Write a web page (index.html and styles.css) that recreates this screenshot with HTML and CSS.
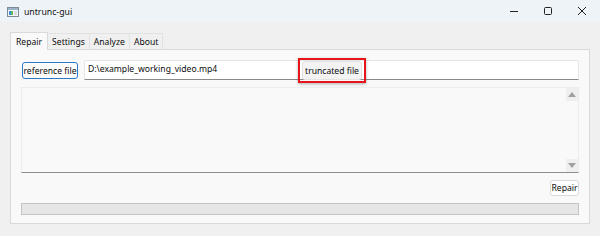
FILE: index.html
```html
<!DOCTYPE html>
<html lang="en">
<head>
    <meta charset="UTF-8">
    <title>untrunc-gui</title>
    <link rel="stylesheet" href="styles.css">
</head>
<body>
    <div class="window">
        <div class="titlebar">
            <svg class="app-icon" width="12" height="10" viewBox="0 0 12 10">
                <rect x="0.5" y="0.5" width="11" height="9" fill="#f4f6f8" stroke="#7a8a99"/>
                <rect x="1" y="1" width="10" height="2" fill="#9db4c8"/>
                <rect x="2" y="4" width="2" height="4" fill="#3a8fd0"/>
                <rect x="4" y="4" width="2" height="4" fill="#5cb85c"/>
                <rect x="7" y="4" width="3" height="4" fill="#d8dde2"/>
            </svg>
            <span class="title">untrunc-gui</span>
            <div class="controls">
                <svg width="10" height="10" viewBox="0 0 10 10"><line x1="1" y1="5.5" x2="9" y2="5.5" stroke="#222" stroke-width="1"/></svg>
                <svg width="10" height="10" viewBox="0 0 10 10"><rect x="1.5" y="1.5" width="7" height="7" rx="1" fill="none" stroke="#222" stroke-width="1"/></svg>
                <svg width="10" height="10" viewBox="0 0 10 10"><path d="M1 1 L9 9 M9 1 L1 9" stroke="#222" stroke-width="1"/></svg>
            </div>
        </div>
        <div class="main">
            <div class="tabs">
                <div class="tab active">Repair</div>
                <div class="tab">Settings</div>
                <div class="tab">Analyze</div>
                <div class="tab">About</div>
            </div>
            <div class="panel">
                <div class="file-row">
                    <button class="btn btn-focus">reference file</button>
                    <div class="path-input">D:\example_working_video.mp4</div>
                    <div class="highlight"><button class="btn btn-plain">truncated file</button></div>
                </div>
                <div class="log">
                    <div class="scrollbar">
                        <span class="scroll-btn"><span class="arrow up"></span></span>
                        <span class="scroll-btn"><span class="arrow down"></span></span>
                    </div>
                </div>
                <div class="action-row">
                    <button class="btn btn-repair">Repair</button>
                </div>
                <div class="progress"></div>
            </div>
        </div>
    </div>
</body>
</html>
```

FILE: styles.css
```css
html, body {
    margin: 0;
    padding: 0;
}
body {
    font-family: "Noto Sans", "Open Sans", sans-serif;
    font-size: 8.6px;
    color: #0c0c0c;
    background-color: #f0f0f0;
    width: 600px;
    height: 236px;
    overflow: hidden;
}
.window {
    height: 236px;
    display: flex;
    flex-direction: column;
}
.titlebar {
    height: 22px;
    background-color: #eef3f8;
    display: flex;
    align-items: center;
    padding-left: 7px;
}
.app-icon {
    margin-right: 5px;
    margin-top: 1px;
}
.title {
    font-size: 8.7px;
    color: #111;
    margin-top: 1px;
}
.controls {
    margin-left: auto;
    display: flex;
    align-items: center;
    gap: 24px;
    padding-right: 13px;
}
.main {
    flex: 1;
    padding: 10px 10px 0 10px;
}
.tabs {
    display: flex;
    align-items: flex-end;
    height: 17px;
}
.tab {
    height: 15px;
    line-height: 16px;
    padding: 0 4px;
    border: 1px solid #e2e2e2;
    border-bottom: none;
    background-color: #f0f0f0;
    margin-left: -1px;
}
.tab.active {
    height: 17px;
    line-height: 18px;
    padding: 0 5px;
    margin-left: 0;
    background-color: #f9f9f9;
    border-color: #d9d9d9;
    position: relative;
    z-index: 1;
    margin-bottom: -1px;
}
.panel {
    height: 163px;
    border: 1px solid #d9d9d9;
    background-color: #f9f9f9;
    padding: 10px 10px 0 10px;
}
.file-row {
    display: flex;
    align-items: center;
    gap: 6px;
    height: 19px;
    position: relative;
}
.btn {
    font-family: inherit;
    font-size: 8.6px;
    color: #0c0c0c;
    background-color: #fdfdfd;
    border: 1px solid #d0d0d0;
    border-radius: 3px;
    padding: 0;
    height: 17px;
    line-height: 14px;
    white-space: nowrap;
    cursor: pointer;
}
.btn-focus {
    border: 1px solid #2b79c9;
    width: 56px;
    margin-left: 1px;
    margin-top: 2px;
}
.path-input {
    flex: 1;
    height: 18px;
    line-height: 17px;
    background-color: #fff;
    border: 1px solid #e6e6e6;
    border-bottom: 1px solid #8a8a8a;
    padding-left: 3px;
    border-radius: 2px 2px 0 0;
}
.highlight {
    position: absolute;
    left: 277px;
    top: -2px;
    width: 64px;
    height: 21px;
    border: 2px solid #e8141c;
    box-shadow: 0 1px 3px rgba(0, 0, 0, 0.3);
    display: flex;
    align-items: center;
    justify-content: center;
}
.btn-plain {
    background-color: #f3f3f3;
    border-color: #e3e3e3;
    width: 60px;
    height: 19px;
}
.log {
    margin-top: 8px;
    height: 84px;
    border: 1px solid #ececec;
    border-bottom: 1px solid #8d8d8d;
    background-color: #f9f9f9;
    display: flex;
    justify-content: flex-end;
}
.scrollbar {
    width: 12px;
    display: flex;
    flex-direction: column;
    justify-content: space-between;
}
.scroll-btn {
    height: 13px;
    background-color: #efefef;
    display: flex;
    align-items: center;
    justify-content: center;
}
.arrow {
    width: 0;
    height: 0;
    border-left: 4px solid transparent;
    border-right: 4px solid transparent;
}
.arrow.up {
    border-bottom: 5px solid #a0a0a0;
}
.arrow.down {
    border-top: 5px solid #a0a0a0;
}
.action-row {
    display: flex;
    justify-content: flex-end;
    margin-top: 7px;
}
.btn-repair {
    width: 29px;
    height: 16px;
    border-color: #dadada;
    background-color: #fff;
}
.progress {
    margin-top: 7px;
    height: 10px;
    border: 1px solid #c4c4c4;
    background-color: #e6e6e6;
}
```
